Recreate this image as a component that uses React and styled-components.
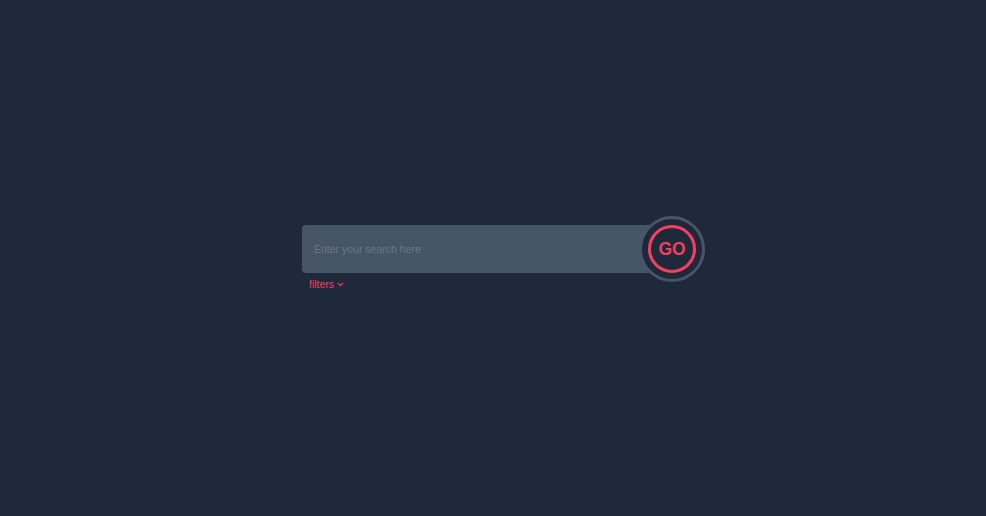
import styled, { createGlobalStyle } from 'styled-components';

const GlobalStyle = createGlobalStyle`
  html, body {
    margin: 0;
    padding: 0;
    background: #1e293b;
    font-family: "Liberation Sans", Arial, sans-serif;
  }
`;

function ChevronDown() {
  return (
    <svg width="9" height="9" viewBox="0 0 24 24" fill="none" stroke="currentColor" strokeWidth="3.5" strokeLinecap="round" strokeLinejoin="round">
      <path d="M6 9l6 6 6-6" />
    </svg>
  );
}

export default function App() {
  return (
    <Page>
      <GlobalStyle />
      <SearchBox>
        <InputRow>
          <SearchInput type="text" placeholder="Enter your search here" />
          <GoRing>
            <GoButton type="button">GO</GoButton>
          </GoRing>
        </InputRow>
        <FiltersToggle type="button">
          filters <ChevronDown />
        </FiltersToggle>
      </SearchBox>
    </Page>
  );
}

const Page = styled.div`
  width: 100%;
  height: 100vh;
  background: #1e293b;
  display: flex;
  justify-content: center;
  align-items: center;
`;

const SearchBox = styled.div`
  width: 384px;
  display: flex;
  flex-direction: column;
  align-items: flex-start;
  margin: -1px 0 0 2px;
`;

const InputRow = styled.div`
  position: relative;
  width: 100%;
  height: 48px;
`;

const SearchInput = styled.input`
  box-sizing: border-box;
  width: 100%;
  height: 100%;
  border: none;
  outline: none;
  border-radius: 4px;
  background: #475569;
  color: #e2e8f0;
  padding: 0 60px 0 12px;
  font-family: "Liberation Sans", Arial, sans-serif;
  font-size: 10.5px;

  &::placeholder {
    color: #6b7688;
  }
`;

const GoRing = styled.div`
  position: absolute;
  top: 50%;
  right: -19px;
  transform: translateY(-50%);
  box-sizing: border-box;
  width: 66px;
  height: 66px;
  border-radius: 50%;
  border: 3px solid #475569;
  background: #1e293b;
  display: flex;
  justify-content: center;
  align-items: center;
`;

const GoButton = styled.button`
  box-sizing: border-box;
  width: 48px;
  height: 48px;
  border-radius: 50%;
  border: 3px solid #f43f5e;
  background: transparent;
  color: #f43f5e;
  font-family: "Liberation Sans", Arial, sans-serif;
  font-weight: 700;
  font-size: 17.5px;
  padding: 0;
  cursor: pointer;
  display: flex;
  justify-content: center;
  align-items: center;
`;

const FiltersToggle = styled.button`
  margin: 5px 0 0 7px;
  padding: 0;
  border: none;
  background: transparent;
  color: #f43f5e;
  font-family: "Liberation Sans", Arial, sans-serif;
  font-size: 10.5px;
  display: flex;
  align-items: center;
  gap: 2px;
  cursor: pointer;
`;
